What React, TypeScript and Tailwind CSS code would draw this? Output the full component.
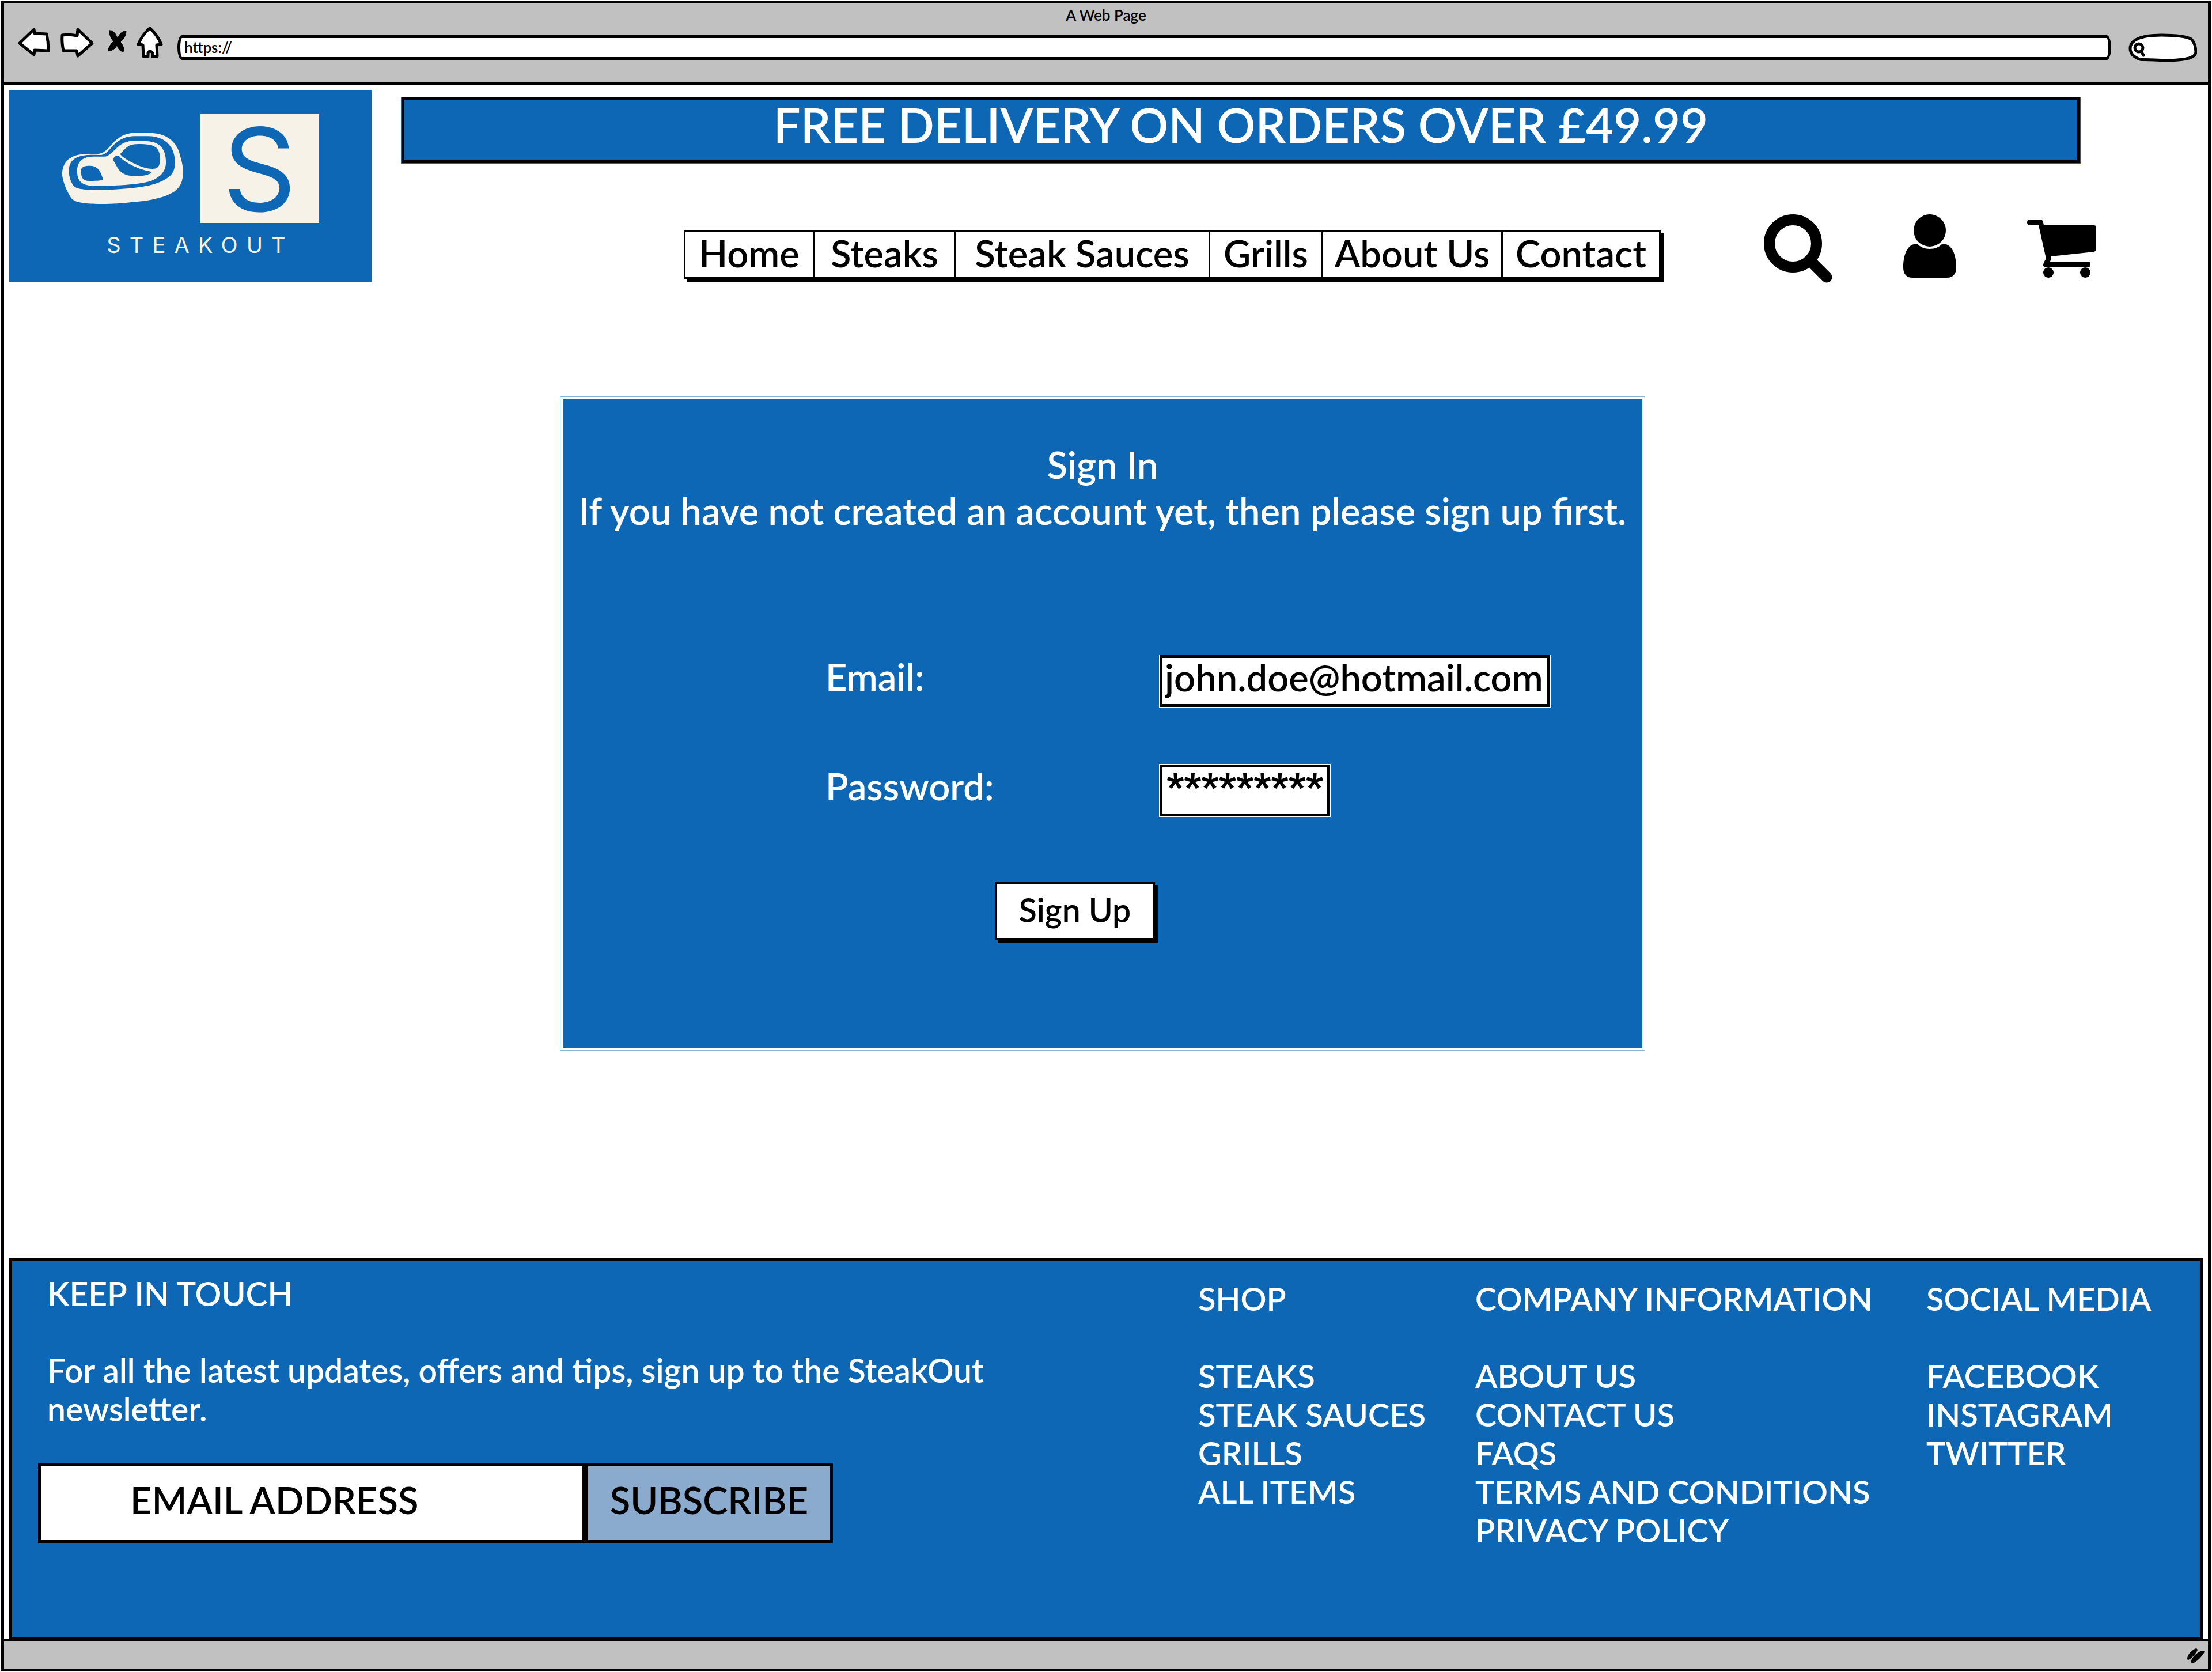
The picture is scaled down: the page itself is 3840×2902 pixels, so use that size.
import type { ReactNode } from "react";

const navLinks = [
  { label: "Home", width: "w-[226px]" },
  { label: "Steaks", width: "w-[244px]" },
  { label: "Steak Sauces", width: "w-[442px]" },
  { label: "Grills", width: "w-[196px]" },
  { label: "About Us", width: "w-[312px]" },
  { label: "Contact", width: "w-[274px]" },
];

const footerColumns = [
  { title: "SHOP", links: ["STEAKS", "STEAK SAUCES", "GRILLS", "ALL ITEMS"] },
  {
    title: "COMPANY INFORMATION",
    links: ["ABOUT US", "CONTACT US", "FAQS", "TERMS AND CONDITIONS", "PRIVACY POLICY"],
  },
  { title: "SOCIAL MEDIA", links: ["FACEBOOK", "INSTAGRAM", "TWITTER"] },
];

function ToolButton({ label, viewBox, width, children }: { label: string; viewBox: string; width: number; children: ReactNode }) {
  return (
    <button type="button" aria-label={label} className="shrink-0">
      <svg
        width={width}
        height={72}
        viewBox={viewBox}
        className="block overflow-visible"
        fill="white"
        stroke="black"
        strokeWidth={5}
        strokeLinejoin="round"
        strokeLinecap="round"
      >
        {children}
      </svg>
    </button>
  );
}

function BrowserBar() {
  return (
    <div className="border-b-[5px] border-black bg-[#c1c1c1] pb-[25px]">
      <p className="text-center text-[26px] leading-10">A Web Page</p>
      <div className="flex items-center gap-5 pr-[19px] pl-6">
        <ToolButton label="Back" viewBox="31 46 56 72" width={56}>
          <path d="M34 75 L59 51 L60 58 L81 59 Q84 73 84 88 L60 87 L59 95 Z" />
        </ToolButton>
        <ToolButton label="Forward" viewBox="107 46 58 72" width={58}>
          <path d="M108 61 Q120 59 134 62 L135 51 L160 75 L135 97 L133 88 L110 88 Q107 74 108 61 Z" />
        </ToolButton>
        <ToolButton label="Stop" viewBox="185 46 35 72" width={35}>
          <path
            d="M190 53 Q197 52 201 60 L204 66 Q210 53 219 54 Q219 64 209 73 Q216 81 215 89 Q209 91 205 83 L203 79 Q197 89 188 88 Q188 80 197 72 Q189 62 190 53 Z"
            fill="black"
            strokeWidth={1}
          />
        </ToolButton>
        <ToolButton label="Home" viewBox="240 46 44 72" width={44}>
          <path d="M260 49 Q273 60 280 77 L272 78 L273 98 H265 V92 Q260 86 257 92 V98 H249 L248 78 L240 77 Q247 60 260 49 Z" />
        </ToolButton>
        <input
          aria-label="Address"
          defaultValue="https://"
          className="ml-1 h-[43px] min-w-0 flex-1 rounded-[8px/50%] border-[5px] border-black bg-white px-[7px] text-[26px] leading-8 outline-none"
        />
        <label className="relative ml-2.5 block h-[49px] w-[119px] shrink-0">
          <svg viewBox="0 0 119 49" width={119} height={49} className="absolute inset-0" fill="none" stroke="black" strokeWidth={5} strokeLinecap="round">
            <path
              fill="white"
              d="M3 26 C3 12 20 3 57 3 C80 3 100 5 109 10 C115 16 117 25 117 33 C116 38 112 41 105 43 C85 48 60 47 45 46 C30 45 25 46 20 45 C9 41 3 34 3 26 Z"
            />
            <circle cx="18" cy="25" r="7" />
            <path d="M22 31 L26 38" />
          </svg>
          <input aria-label="Search" className="relative h-full w-full bg-transparent pr-4 pl-9 text-[26px] outline-none" />
        </label>
      </div>
    </div>
  );
}

function Logo() {
  return (
    <a href="#" aria-label="Steakout" className="flex h-[334px] w-[630px] shrink-0 flex-col items-center bg-[#0d67b5] pt-[42px] font-['Inter',sans-serif] font-normal text-[#f7f2e7]">
      <span className="flex items-center gap-[29px]">
        <svg viewBox="242 690 470 374" width={210} height={125} preserveAspectRatio="none">
          <path fill="#f7f2e7" d="M242 905 C242 850 268 808 320 803 C345 800 370 802 387 800 C430 790 440 697 520 692 H580 C645 692 688 735 700 810 C708 850 711 860 711 895 C711 945 702 970 682 992 C640 1033 560 1048 510 1052 C470 1058 430 1062 380 1061 C325 1060 290 1052 278 1032 C268 1012 266 1005 260 990 C250 960 242 930 242 905 Z" />
          <path fill="#0d67b5" d="M268 890 C268 840 290 812 340 807 C370 805 382 808 397 806 C430 795 445 712 520 709 H575 C640 709 680 760 680 845 C680 900 662 918 640 935 C600 965 540 976 500 980 C460 984 420 989 380 989 C320 987 295 982 285 965 C275 945 268 920 268 890 Z" />
          <path fill="#f7f2e7" d="M300 890 C300 850 315 822 350 816 C380 813 395 817 412 814 C442 802 455 745 505 735 H565 C620 735 645 775 645 845 C645 900 615 925 590 940 C550 960 480 963 440 966 C400 969 370 969 350 966 C310 960 300 930 300 890 Z" />
          <g fill="#0d67b5">
            <path d="M467 802 C475 790 490 768 500 760 C510 752 525 750 545 750 C575 750 600 755 612 775 C622 795 624 820 622 840 C620 865 612 875 600 878 C570 882 535 860 510 843 C490 830 472 812 467 802 Z" />
            <path d="M440 832 C442 815 452 808 462 811 C470 825 490 845 520 865 C545 880 565 888 585 893 C592 898 580 907 570 911 C550 918 510 918 490 910 C460 895 455 865 445 845 Z" />
            <path d="M315 890 C315 870 325 863 350 863 C375 863 388 885 393 905 C397 920 400 925 400 933 C398 940 380 940 350 942 C325 942 315 930 315 890 Z" />
          </g>
        </svg>
        <span className="flex h-[189px] w-[207px] items-center justify-center bg-[#f7f2e7] text-[200px] leading-none text-[#0d67b5]">S</span>
      </span>
      <span className="mt-[19px] pl-[34px] text-[38px] leading-none tracking-[0.4em]">STEAKOUT</span>
    </a>
  );
}

function SiteHeader() {
  return (
    <header className="flex pt-2 pl-[9px]">
      <Logo />
      <div className="ml-[50px] flex-1 pt-3">
        <p className="mr-[221px] flex h-[116px] items-center justify-center border border-[#0d67b5] bg-black p-[5px] text-[83px] text-white">
          <span className="flex h-full w-full items-center justify-center bg-[#0d67b5] pb-5 leading-none">
            FREE DELIVERY ON ORDERS OVER £49.99
          </span>
        </p>
        <div className="mt-[88px] flex items-start pl-[491px]">
          <nav className="mt-[27px] flex h-[85px] border-y-4 border-l-2 border-black bg-white shadow-[5px_5px_0_#000]">
            {navLinks.map((link) => (
              <a
                key={link.label}
                href="#"
                className={`${link.width} flex items-center justify-center border-r-[3px] border-black pb-1 text-[65px] leading-none whitespace-nowrap`}
              >
                {link.label}
              </a>
            ))}
          </nav>
          <div className="ml-[179px] flex gap-[123px]">
            <button type="button" aria-label="Search">
              <svg width={119} height={119} viewBox="0 0 119 119" fill="none" stroke="black">
                <circle cx="50.5" cy="50.5" r="41" strokeWidth="19" />
                <path d="M82 82 L109 109" strokeWidth="19" strokeLinecap="round" />
              </svg>
            </button>
            <button type="button" aria-label="Account">
              <svg width={92} height={119} viewBox="0 0 92 119">
                <circle cx="46" cy="28" r="28" />
                <path d="M24 51 C6 51 0 72 0 92 C0 104 6 110 16 110 H76 C86 110 92 104 92 92 C92 72 86 51 68 51 C62 57 55 60 46 60 C37 60 30 57 24 51 Z" />
              </svg>
            </button>
            <button type="button" aria-label="Basket">
              <svg width={120} height={119} viewBox="0 -9 120 119">
                <path d="M5 0 H23 C27 0 28 4 29 10 H116 Q120 10 120 14 V51 Q120 55 116 56 L41 64 Q42 68 40 73 H105 Q110 73 110 78 Q110 83 105 83 H33 Q28 83 28 79 Q28 75 33 68 L20 10 H5 Q0 10 0 5 Q0 0 5 0 Z" />
                <circle cx="37" cy="92" r="9" />
                <circle cx="101" cy="92" r="9" />
              </svg>
            </button>
          </div>
        </div>
      </div>
    </header>
  );
}

function SignInForm() {
  return (
    <main className="mt-[197px] flex justify-center pr-3">
      <div className="w-[1884px] border border-[#0d67b5]/50 p-1">
        <form className="bg-[#0d67b5] pt-[73px] pb-[187px] text-[65px]">
          <h1 className="text-center leading-[80px] text-white">Sign In</h1>
          <p className="text-center leading-[80px] text-white">
            If you have not created an account yet, then please sign up first.
          </p>
          <div className="mt-[211px] grid grid-cols-[580px_1fr] items-center gap-y-[100px] pl-[456px]">
            <label htmlFor="email" className="pb-4 leading-none text-white">
              Email:
            </label>
            <input
              id="email"
              type="text"
              defaultValue="john.doe@hotmail.com"
              className="h-[90px] w-[678px] border-[5px] border-black bg-white px-1 pb-3 ring-1 ring-white outline-none"
            />
            <label htmlFor="password" className="pb-4 leading-none text-white">
              Password:
            </label>
            <input
              id="password"
              type="text"
              defaultValue="*********"
              className="h-[90px] w-[296px] border-[5px] border-black bg-white pb-3 text-center font-['Roboto',sans-serif] font-black ring-1 ring-white outline-none"
            />
          </div>
          <button
            type="button"
            className="mt-[114px] ml-[750px] block h-[101px] w-[278px] border-4 border-black bg-white pb-1 text-[57px] leading-none shadow-[5px_5px_0_#000]"
          >
            Sign Up
          </button>
        </form>
      </div>
    </main>
  );
}

function SiteFooter() {
  return (
    <footer className="mx-[9px] mt-auto grid grid-cols-[2059fr_481fr_783fr_475fr] border-[5px] border-b-2 border-black bg-[#0d67b5] leading-[67px] text-white">
      <section className="pt-6 pb-[164px] pl-[45px] text-[57px]">
        <div className="max-w-[1720px] pl-4">
          <h2>KEEP IN TOUCH</h2>
          <p className="mt-[66px]">For all the latest updates, offers and tips, sign up to the SteakOut newsletter.</p>
        </div>
        <form className="mt-[61px] flex text-[65px] text-black">
          <input
            type="text"
            aria-label="Email address"
            placeholder="EMAIL ADDRESS"
            className="h-[138px] w-[950px] border-[5px] border-black bg-white pb-3 pl-[155px] outline-none placeholder:text-black placeholder:opacity-100"
          />
          <button type="button" className="h-[138px] w-[430px] border-[5px] border-black bg-[#8babce] pb-3 leading-none">
            SUBSCRIBE
          </button>
        </form>
      </section>
      {footerColumns.map((column) => (
        <section key={column.title} className="pt-8 text-[56px] whitespace-nowrap">
          <h2>{column.title}</h2>
          <ul className="mt-[67px]">
            {column.links.map((link) => (
              <li key={link}>
                <a href="#">{link}</a>
              </li>
            ))}
          </ul>
        </section>
      ))}
    </footer>
  );
}

export default function App() {
  return (
    <div className="flex min-h-screen flex-col bg-white px-0.5 py-px font-['Lato',sans-serif] font-semibold text-black">
      <div className="flex flex-1 flex-col border-[5px] border-black">
        <BrowserBar />
        <SiteHeader />
        <SignInForm />
        <SiteFooter />
        <div className="flex h-[52px] items-center justify-end border-t-[5px] border-black bg-[#c1c1c1] pr-1">
          <svg width={34} height={28} viewBox="0 0 34 28">
            <path d="M2 20 C2 12 12 3 18 2 Q21 4 19 7 Q12 18 4 22 Q2 22 2 20 Z" />
            <path d="M9 26 C8 18 22 6 30 6 Q33 7 31 10 Q22 24 11 28 Q9 28 9 26 Z" />
          </svg>
        </div>
      </div>
    </div>
  );
}
